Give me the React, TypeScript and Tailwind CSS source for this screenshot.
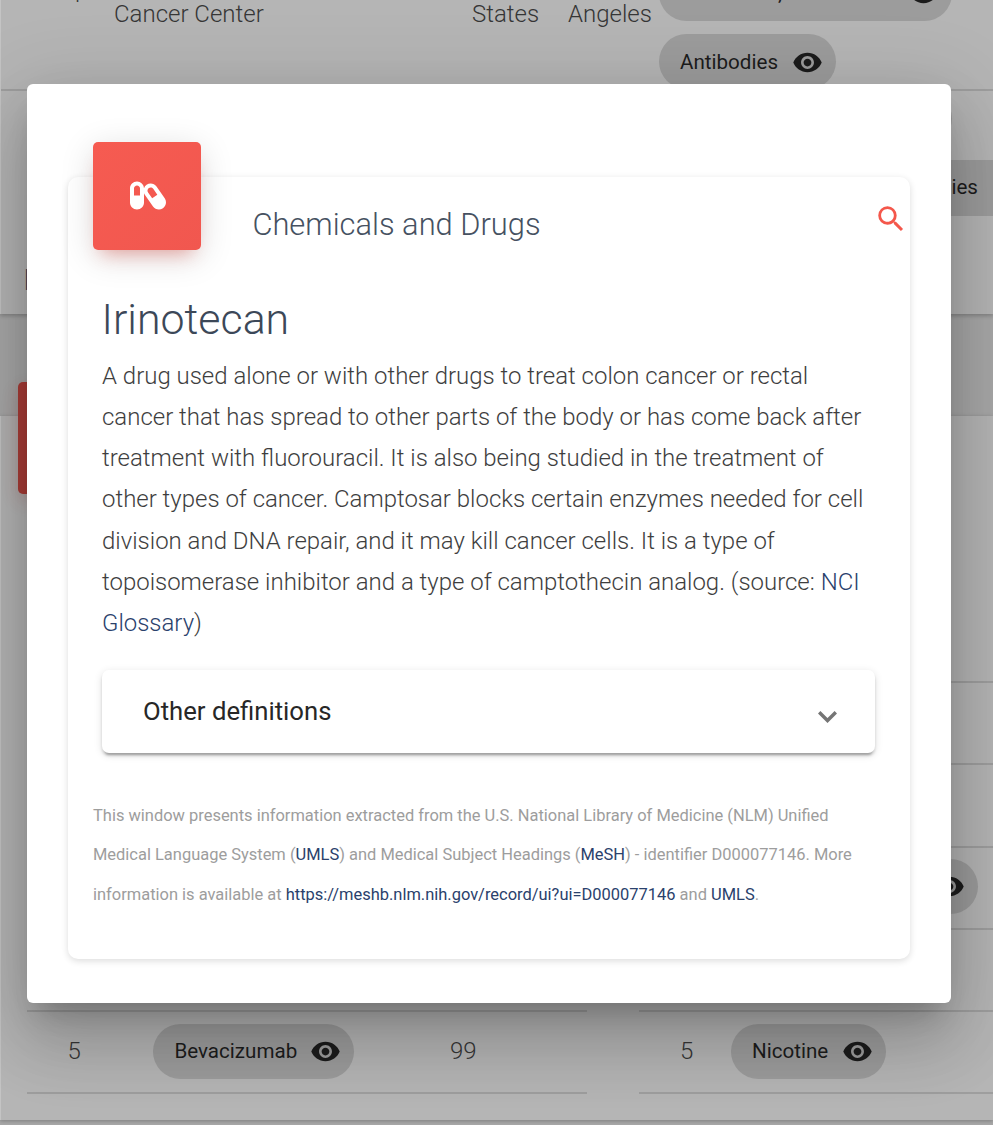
import type { ReactNode } from "react";
import { MdSearch, MdVisibility } from "react-icons/md";
import { FaCapsules } from "react-icons/fa";

function Chip({ label, className = "" }: { label: string; className?: string }) {
  return (
    <div className={`flex h-[54.8px] shrink-0 items-center rounded-full bg-[#9c9c9c] pl-[21px] pr-[13.5px] text-[20.6px] font-normal text-[#1c1c1c] ${className}`}>
      <span className="whitespace-nowrap">{label}</span>
      <MdVisibility className="ml-[13px] h-[31px] w-[31px] shrink-0" />
    </div>
  );
}

function EmptyRow() {
  return <div className="h-[82.2px] shrink-0 border-b-2 border-[#9e9e9e]" />;
}

function TrialsCard() {
  return (
    <section className="relative z-10 flex h-[314px] shrink-0 flex-col border-l border-[#c4c4c4] bg-[#b5b5b5] shadow-[0_2px_4px_rgba(0,0,0,0.22)]">
      <div className="flex h-[91px] shrink-0 border-b-2 border-[#9e9e9e] text-[24px] font-light text-[#363636]">
        <div className="-mt-[24px] w-[113px] pl-[67px]">4</div>
        <div className="w-[358px] leading-[29px]">Cancer Center</div>
        <div className="w-[96px] leading-[29px]">States</div>
        <div className="w-[91px] leading-[29px]">Angeles</div>
        <div className="-mt-[34px] flex flex-col items-start gap-[13.5px]">
          <Chip label="Antibodies, Monoclonal" className="w-[293px] justify-between" />
          <Chip label="Antibodies" className="w-[177px] justify-between pt-px" />
        </div>
      </div>
      <div className="flex flex-col items-start gap-[14px]">
        <Chip label="Antibodies" className="ml-[774px] w-[177px] justify-between" />
        <div className="ml-[832px] h-[56px] w-[160px] overflow-hidden bg-[#9c9c9c] pr-[15px] text-right text-[20.6px] leading-[54px] text-[#1c1c1c]">Antibodies</div>
      </div>
      <h3 className="ml-[22px] mt-[44px] text-[29px] font-light leading-[40px] text-[#3c4858]">Interventions</h3>
    </section>
  );
}

function RankCell({ children, className }: { children: ReactNode; className: string }) {
  return <span className={`shrink-0 text-[24px] font-light text-[#363636] ${className}`}>{children}</span>;
}

function ChemicalsCard() {
  return (
    <section className="relative mt-[102px] flex h-[704px] shrink-0 justify-between border-l border-[#c4c4c4] bg-[#b5b5b5] pl-[26px] shadow-[0_1px_4px_rgba(0,0,0,0.25)]">
      <div className="absolute -top-[34px] left-[17px] h-[112px] w-[112px] rounded-[5px] bg-[#aa3d37] shadow-[0_7px_17px_rgba(150,40,35,0.2)]" />
      <div className="flex w-[560px] flex-col pt-[185px]">
        <EmptyRow /><EmptyRow /><EmptyRow /><EmptyRow /><EmptyRow />
        <div className="flex h-[82.2px] shrink-0 items-center border-b-2 border-[#9e9e9e] pb-[1.4px]">
          <RankCell className="w-[126.4px] pl-[40.5px]">5</RankCell>
          <Chip label="Bevacizumab" className="w-[200.5px] justify-between" />
          <RankCell className="ml-[96px]">99</RankCell>
        </div>
      </div>
      <div className="flex w-[354px] flex-col pt-[185px]">
        <EmptyRow /><EmptyRow /><EmptyRow />
        <div className="flex h-[82.2px] shrink-0 items-center border-b-2 border-[#9e9e9e] pb-[2px]">
          <Chip label="Carboplatin" className="ml-[92px] w-[247px] justify-between" />
        </div>
        <EmptyRow />
        <div className="flex h-[82.2px] shrink-0 items-center border-b-2 border-[#9e9e9e] pb-[1.4px]">
          <RankCell className="w-[92px] pl-[41px]">5</RankCell>
          <Chip label="Nicotine" className="w-[155px] justify-between" />
        </div>
      </div>
    </section>
  );
}

function Link({ children }: { children: ReactNode }) {
  return <a className="text-[#2a416c]">{children}</a>;
}

function DefinitionDialog() {
  return (
    <div role="dialog" className="absolute left-[27px] top-[84px] z-20 h-[919px] w-[924px] rounded-[6px] bg-white px-[41px] pt-[93px] shadow-[0_19px_26px_-12px_rgba(0,0,0,0.2),0_41px_65px_5px_rgba(0,0,0,0.14),0_15px_79px_14px_rgba(0,0,0,0.12)]">
      <div className="flex h-[782px] flex-col rounded-[10px] bg-white shadow-[0_2px_7px_rgba(0,0,0,0.14)]">
        <header className="flex h-[113px] items-start">
          <div className="-mt-[34.6px] ml-[25.4px] flex h-[108px] w-[108px] items-center justify-center rounded-[5px] bg-gradient-to-br from-[#f65b51] to-[#f1574f] pl-px text-white shadow-[0_7px_34px_rgba(0,0,0,0.14),0_12px_17px_-9px_rgba(244,67,54,0.4)]">
            <FaCapsules className="mb-px h-[35px] w-[36px]" />
          </div>
          <h2 className="ml-[51px] mt-[26px] text-[30.85px] font-light leading-[43px] text-[#465161]">Chemicals and Drugs</h2>
          <MdSearch className="ml-auto mr-[2px] mt-[25px] h-[34px] w-[34px] text-[#f4574b]" />
        </header>
        <h1 className="-mt-px ml-[33.5px] text-[42.86px] font-light leading-[60px] text-[#3c4858]">Irinotecan</h1>
        <p className="ml-[34px] mt-[7px] whitespace-nowrap text-[23.97px] font-light leading-[41.14px] text-[#3e3e3e]">
          A drug used alone or with other drugs to treat colon cancer or rectal<br />
          cancer that has spread to other parts of the body or has come back after<br />
          treatment with fluorouracil. It is also being studied in the treatment of<br />
          other types of cancer. Camptosar blocks certain enzymes needed for cell<br />
          division and DNA repair, and it may kill cancer cells. It is a type of<br />
          topoisomerase inhibitor and a type of camptothecin analog. (source: <Link>NCI</Link><br />
          <Link>Glossary</Link>)
        </p>
        <button className="ml-[34px] mt-[26px] flex h-[83px] w-[773px] shrink-0 items-center justify-between rounded-[7px] bg-white pl-[41px] pr-[38.5px] text-[25.7px] text-[#272727] shadow-[0_5px_2px_-3px_rgba(0,0,0,0.2),0_3px_3px_rgba(0,0,0,0.14),0_2px_9px_rgba(0,0,0,0.12)]">
          <span className="pb-px">Other definitions</span>
          <svg viewBox="0 0 19 12" className="mt-[11px] h-[12px] w-[19px]" fill="none" stroke="#757575" strokeWidth="3.4">
            <path d="M1.2 1.2 9.5 9.5l8.3-8.3" />
          </svg>
        </button>
        <p className="ml-[25px] mt-[43px] whitespace-nowrap text-[16.47px] leading-[39.4px] text-[#9d9d9d]">
          This window presents information extracted from the U.S. National Library of Medicine (NLM) Unified<br />
          Medical Language System (<Link>UMLS</Link>) and Medical Subject Headings (<Link>MeSH</Link>) - identifier D000077146. More<br />
          information is available at <Link>https://meshb.nlm.nih.gov/record/ui?ui=D000077146</Link> and <Link>UMLS</Link>.
        </p>
      </div>
    </div>
  );
}

export default function App() {
  return (
    <main className="relative flex h-[1125px] w-[993px] flex-col overflow-hidden bg-[#a8a8a8] font-[Roboto,sans-serif]">
      <TrialsCard />
      <ChemicalsCard />
      <DefinitionDialog />
    </main>
  );
}
